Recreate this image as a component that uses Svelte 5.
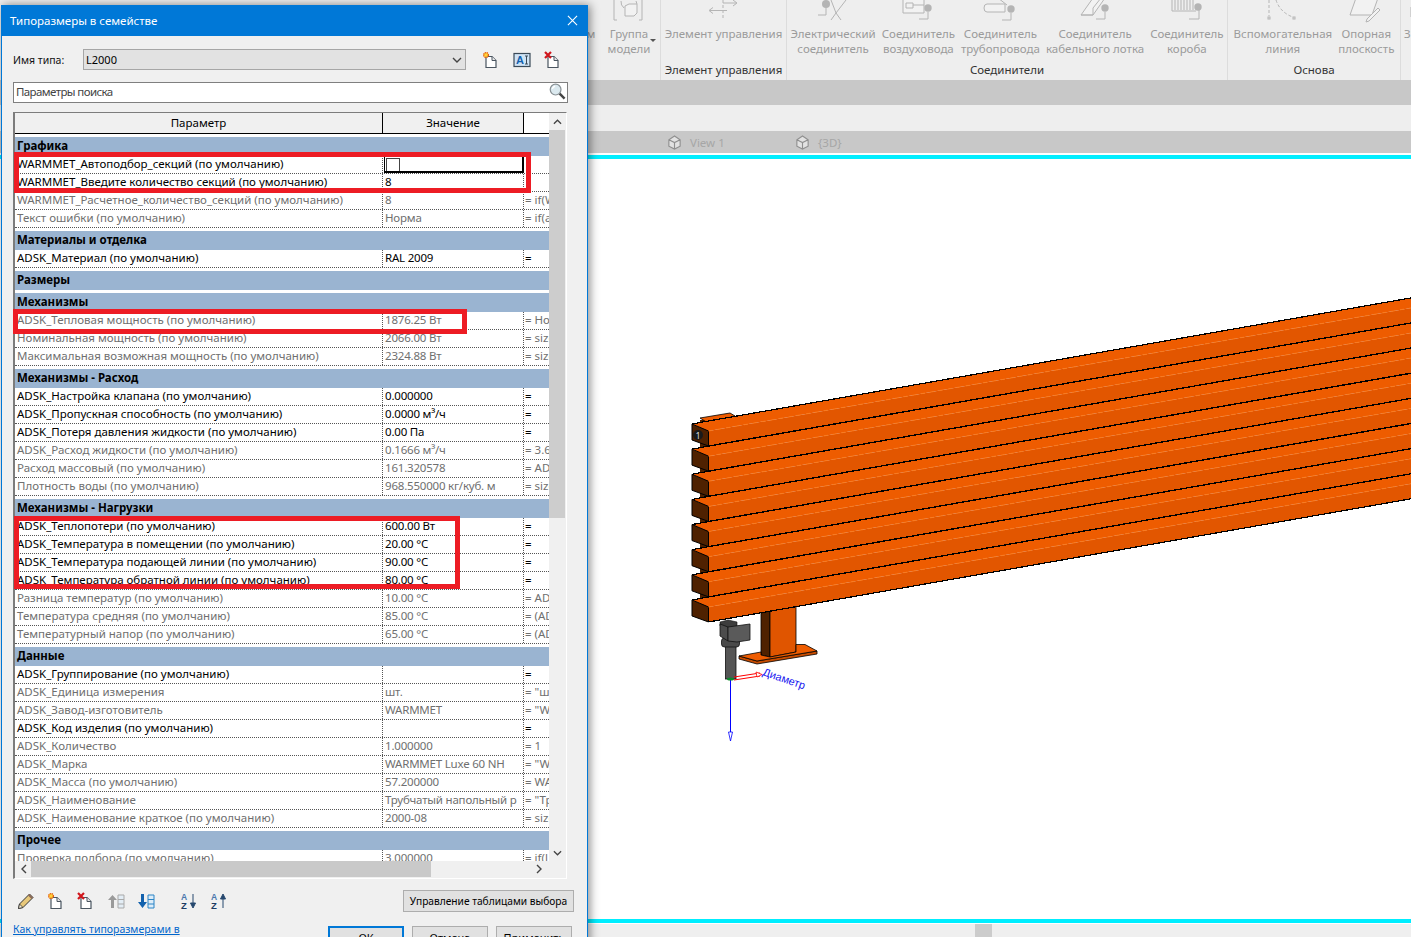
<script>
    const groups = [
        { name: "Графика", rows: [
            { p: "WARMMET_Автоподбор_секций (по умолчанию)", v: "", f: "", check: true },
            { p: "WARMMET_Введите количество секций (по умолчанию)", v: "8", f: "" },
            { p: "WARMMET_Расчетное_количество_секций (по умолчанию)", v: "8", f: "= if(W", off: true },
            { p: "Текст ошибки (по умолчанию)", v: "Норма", f: "= if(a", off: true },
        ]},
        { name: "Материалы и отделка", rows: [
            { p: "ADSK_Материал (по умолчанию)", v: "RAL 2009", f: "=" },
        ]},
        { name: "Размеры", rows: [] },
        { name: "Механизмы", rows: [
            { p: "ADSK_Тепловая мощность (по умолчанию)", v: "1876.25 Вт", f: "= Но", off: true },
            { p: "Номинальная мощность (по умолчанию)", v: "2066.00 Вт", f: "= size", off: true },
            { p: "Максимальная возможная мощность (по умолчанию)", v: "2324.88 Вт", f: "= size", off: true },
        ]},
        { name: "Механизмы - Расход", rows: [
            { p: "ADSK_Настройка клапана (по умолчанию)", v: "0.000000", f: "=" },
            { p: "ADSK_Пропускная способность (по умолчанию)", v: "0.0000 м³/ч", f: "=" },
            { p: "ADSK_Потеря давления жидкости (по умолчанию)", v: "0.00 Па", f: "=" },
            { p: "ADSK_Расход жидкости (по умолчанию)", v: "0.1666 м³/ч", f: "= 3.6", off: true },
            { p: "Расход массовый (по умолчанию)", v: "161.320578", f: "= AD", off: true },
            { p: "Плотность воды (по умолчанию)", v: "968.550000 кг/куб. м", f: "= size", off: true },
        ]},
        { name: "Механизмы - Нагрузки", rows: [
            { p: "ADSK_Теплопотери (по умолчанию)", v: "600.00 Вт", f: "=" },
            { p: "ADSK_Температура в помещении (по умолчанию)", v: "20.00 °C", f: "=" },
            { p: "ADSK_Температура подающей линии (по умолчанию)", v: "90.00 °C", f: "=" },
            { p: "ADSK_Температура обратной линии (по умолчанию)", v: "80.00 °C", f: "=" },
            { p: "Разница температур (по умолчанию)", v: "10.00 °C", f: "= AD", off: true },
            { p: "Температура средняя (по умолчанию)", v: "85.00 °C", f: "= (AD", off: true },
            { p: "Температурный напор (по умолчанию)", v: "65.00 °C", f: "= (AD", off: true },
        ]},
        { name: "Данные", rows: [
            { p: "ADSK_Группирование (по умолчанию)", v: "", f: "=" },
            { p: "ADSK_Единица измерения", v: "шт.", f: "= \"ш", off: true },
            { p: "ADSK_Завод-изготовитель", v: "WARMMET", f: "= \"W", off: true },
            { p: "ADSK_Код изделия (по умолчанию)", v: "", f: "=" },
            { p: "ADSK_Количество", v: "1.000000", f: "= 1", off: true },
            { p: "ADSK_Марка", v: "WARMMET Luxe 60 NH", f: "= \"W", off: true },
            { p: "ADSK_Масса (по умолчанию)", v: "57.200000", f: "= WA", off: true },
            { p: "ADSK_Наименование", v: "Трубчатый напольный р", f: "= \"Тр", off: true },
            { p: "ADSK_Наименование краткое (по умолчанию)", v: "2000-08", f: "= size", off: true },
        ]},
        { name: "Прочее", rows: [
            { p: "Проверка подбора (по умолчанию)", v: "3.000000", f: "= if(l", off: true },
        ]},
    ];

    // радиатор: 8 секций с шагом 25px, все точки в координатах страницы
    const slope = 0.1753;
    const right = 1411;
    const edge = (y, x) => (y - slope * (x - 708.5)).toFixed(1);
    const bars = [0, 1, 2, 3, 4, 5, 6, 7].map((k) => {
        const d = 25.14 * k;
        return {
            top: `692,${424 + d} 701,${edge(421 + d, 701)} ${right},${edge(421 + d, right)} ${right},${edge(431 + d, right)} 708.5,${431 + d}`,
            front: `708.5,${431 + d} ${right},${edge(431 + d, right)} ${right},${edge(446 + d, right)} 708.5,${446 + d}`,
            end: `692,${424 + d} 708.5,${431 + d} 708.5,${446 + d} 692,${440 + d}`,
            topLine: `701,${edge(421 + d, 701)} ${right},${edge(421 + d, right)}`,
            botLine: `708.5,${446 + d} ${right},${edge(446 + d, right)}`,
            dash: `708.5,${431 + d} ${right},${edge(431 + d, right)}`,
        };
    });
</script>

{#snippet docPage()}
    <path d="M4 5.5h6l4 4v7H4z" fill="#fff" stroke="#4a5560" stroke-width="1.2" />
    <path d="M10 5.5v4h4" fill="#e8e8e8" stroke="#4a5560" stroke-width="1" />
{/snippet}

{#snippet newDoc()}
    <svg class="ico" viewBox="0 0 18 18">
        {@render docPage()}
        <circle cx="4" cy="4" r="2.4" fill="#ffd23a" stroke="#e2560c" stroke-width="1.3" stroke-dasharray="1.2 0.6" />
    </svg>
{/snippet}

{#snippet delDoc()}
    <svg class="ico" viewBox="0 0 18 18">
        {@render docPage()}
        <path d="M1 1l6 6M7 1L1 7" stroke="#d0161c" stroke-width="2.2" />
    </svg>
{/snippet}

<div class="app">
    <div class="ribbon">
        <div class="panel p-model">
            <div class="tools">
                <div class="tool narrow"><div class="iconbox"></div><span>м</span></div>
                <div class="tool model">
                    <svg class="ri" viewBox="-20 0 40 26">
                        <path d="M-12 -2h-3v22h3M10 -2h3v22h-3" />
                        <path d="M-4 6l4-2h8v9l-3 3h-9z" fill="#f4f4f4" />
                        <path d="M-8 1a8 8 0 0 0 3 7M7 1l1 3" />
                    </svg>
                    <span>Группа<br />модели</span>
                    <i class="caret"></i>
                </div>
            </div>
            <div class="plabel"></div>
        </div>
        <div class="panel p-control">
            <div class="tools">
                <div class="tool">
                    <svg class="ri" viewBox="-20 0 40 26">
                        <path d="M0 0v20" stroke-dasharray="3 2" />
                        <path d="M0 3h13M10 0l4 3-4 3" />
                        <path d="M4 10.500h-17M-10 7.500l-4 3 4 3" />
                    </svg>
                    <span>Элемент управления<br />&nbsp;</span>
                </div>
            </div>
            <div class="plabel">Элемент управления</div>
        </div>
        <div class="panel p-conn">
            <div class="tools">
                <div class="tool">
                    <svg class="ri" viewBox="-20 0 40 26">
                        <circle cx="-7" cy="4" r="4" fill="#b4b4b4" />
                        <path d="M-15 15h8v-7" />
                        <path d="M3 13L13 0M3 13l5 7M3 13l-5 7M3 13L-2 0" />
                    </svg>
                    <span>Электрический<br />соединитель</span>
                </div>
                <div class="tool">
                    <svg class="ri" viewBox="-20 0 40 26">
                        <path d="M-15 -2h21v15h-21z" fill="#f2f2f2" />
                        <path d="M-12 3h7v5h-7zM-5 5h11" />
                        <circle cx="10" cy="8" r="3.700" fill="#b4b4b4" />
                        <path d="M1 19h9v-7" />
                    </svg>
                    <span>Соединитель<br />воздуховода</span>
                </div>
                <div class="tool">
                    <svg class="ri" viewBox="-20 0 40 26">
                        <path d="M-13 4h18v8h-18a3 4 0 0 1 0-8z" fill="#f2f2f2" />
                        <path d="M-2 -2l9 7" />
                        <circle cx="11" cy="9" r="3.700" fill="#b4b4b4" />
                        <path d="M2 20h9v-7" />
                    </svg>
                    <span>Соединитель<br />трубопровода</span>
                </div>
                <div class="tool">
                    <svg class="ri" viewBox="-20 0 40 26">
                        <path d="M-14 15l12-17h12l-12 17z" fill="#f2f2f2" />
                        <path d="M-2 15v-7l8-10M-14 15h12" />
                        <circle cx="10" cy="8" r="3.700" fill="#b4b4b4" />
                        <path d="M1 19h9v-7" />
                    </svg>
                    <span>Соединитель<br />кабельного лотка</span>
                </div>
                <div class="tool">
                    <svg class="ri" viewBox="-20 0 40 26">
                        <path d="M-15 -2v13h24" />
                        <path d="M-12 -2v12M-9 -2v12M-6 -2v12M-3 -2v12M0 -2v12M3 -2v12M6 -2v12" />
                        <circle cx="11" cy="7" r="3.700" fill="#b4b4b4" />
                        <path d="M2 19h10v-9" />
                    </svg>
                    <span>Соединитель<br />короба</span>
                </div>
            </div>
            <div class="plabel">Соединители</div>
        </div>
        <div class="panel p-base">
            <div class="tools">
                <div class="tool">
                    <svg class="ri" viewBox="-20 0 40 26">
                        <path d="M-14 0v16" stroke-dasharray="3 2" />
                        <path d="M-7 0a26 26 0 0 0 17 17" stroke-dasharray="3 2" />
                        <rect x="-15" y="17" width="2" height="2" />
                        <rect x="10" y="17" width="2" height="2" />
                    </svg>
                    <span>Вспомогательная<br />линия</span>
                </div>
                <div class="tool">
                    <svg class="ri" viewBox="-20 0 40 26">
                        <path d="M-10 -2h22l-6 17h-22z" fill="#e4e4e4" />
                        <path d="M1 19l11-11 2 2-11 11-3 1z" fill="#f2f2f2" />
                    </svg>
                    <span>Опорная<br />плоскость</span>
                </div>
            </div>
            <div class="plabel">Основа</div>
        </div>
        <div class="panel p-rest">
            <div class="tools">
                <div class="tool">
                    <svg class="ri" viewBox="-20 0 40 26"><path d="M-13 7v10" /></svg>
                    <span>З</span>
                </div>
            </div>
        </div>
    </div>
    <div class="band"></div>
    <div class="strip"></div>
    <div class="tabs">
        <div class="tab">
            <svg class="tabico" viewBox="0 0 16 16"><path d="M8 1L2 5v7l6 3 6-3V5zM2 5l6 3 6-3M8 8v7" /></svg>
            <span>View 1</span>
        </div>
        <div class="tab">
            <svg class="tabico" viewBox="0 0 16 16"><path d="M8 1L2 5v7l6 3 6-3V5zM2 5l6 3 6-3M8 8v7" /></svg>
            <span>{"{3D}"}</span>
        </div>
    </div>
    <div class="cyan first"></div>
    <svg class="canvas" viewBox="0 159 1411 760">
        <!-- задняя стойка -->
        <rect x="700" y="420" width="9" height="190" fill="#4f2100" />
        <polygon points="700,418 730,413 735,416 708,423" fill="#ee5c00" stroke="#000" stroke-width="0.8" />

        <!-- опора -->
        <polygon points="761,613 770,611 770,657 761,655" fill="#4f2100" stroke="#000" stroke-width="0.8" />
        <polygon points="770,611 796,606 796,652 770,657" fill="#e05500" stroke="#000" stroke-width="0.8" />
        <polygon points="739,656 739,659 757,664 817,654 817,651 757,661" fill="#c84c00" stroke="#000" stroke-width="0.8" />
        <polygon points="739,656 761,652 761,655 770,657 796,652 796,644.500 805,644.500 817,651 757,661" fill="#ee5c00" stroke="#000" stroke-width="0.8" />

        <!-- клапан -->
        <rect x="725.500" y="646" width="10.500" height="33" fill="#555" stroke="#111" stroke-width="0.8" />
        <rect x="721.500" y="638" width="18" height="9" rx="3" fill="#4a4a4a" stroke="#111" stroke-width="0.8" />
        <polygon points="720,622 728,620 737,622 737,626 728,628 720,626" fill="#3d3d3d" stroke="#111" stroke-width="0.6" />
        <polygon points="720,624 728,627 728,641 720,636" fill="#4c4c4c" stroke="#111" stroke-width="0.8" />
        <polygon points="728,627 750,624 750,640 737,642 728,641" fill="#5a5a5a" stroke="#111" stroke-width="0.8" />

        {#each bars as bar}
            <polygon points={bar.top} fill="#ee5c00" />
            <polygon points={bar.front} fill="#e25600" />
            <polygon points={bar.end} fill="#4f2100" stroke="#000" stroke-width="1" />
            <polyline points={bar.dash} class="dash" />
            <polyline points={bar.topLine} class="edge" />
            <polyline points={bar.botLine} class="edge" />
            <polyline points={bar.top.split(" ").slice(0, 2).join(" ")} class="edge" />
        {/each}

        <circle cx="698" cy="435" r="5" fill="#1a1a1a" />
        <text x="698" y="439" class="marker">1</text>

        <!-- ручки размера -->
        <path d="M730.500 680V733" stroke="#0000ff" fill="none" />
        <polygon points="728.500,732 732.500,732 730.500,741" fill="#fff" stroke="#0000ff" stroke-width="0.8" />
        <path d="M734 677L760 673M734 680L760 676" stroke="#ff0000" fill="none" />
        <polygon points="756,672 762,674.500 757,677" fill="#fff" stroke="#ff0000" stroke-width="0.8" />
        <ellipse cx="730.500" cy="679" rx="3.500" ry="1.500" fill="#0a8a2a" />
        <text x="762" y="675" class="dim" transform="rotate(19 762 675)">Диаметр</text>
    </svg>
    <div class="cyan"></div>
    <div class="status"><div class="statusblock"></div></div>

    <div class="dialog">
        <div class="titlebar">
            <span>Типоразмеры в семействе</span>
            <svg class="close" viewBox="0 0 12 12"><path d="M1 1l10 10M11 1L1 11" /></svg>
        </div>
        <div class="body">
            <div class="typerow">
                <label for="typesel">Имя типа:</label>
                <div class="select" id="typesel">
                    <span>L2000</span>
                    <svg viewBox="0 0 10 6"><path d="M1 1l4 4 4-4" /></svg>
                </div>
                <div class="typeicons">
                    {@render newDoc()}
                    <svg class="ico" viewBox="0 0 18 18">
                        <rect x="1" y="2.500" width="16" height="13" fill="#cfe3f5" stroke="#3a4a58" stroke-width="1.200" />
                        <text x="7" y="13" class="aicon">A</text>
                        <path d="M12 5h3M12 13h3M13.500 5v8" stroke="#3a4a58" fill="none" />
                    </svg>
                    {@render delDoc()}
                </div>
            </div>

            <div class="search">
                <span>Параметры поиска</span>
                <svg viewBox="0 0 18 18">
                    <path d="M11 11l5.500 5.500" stroke="#444" stroke-width="2.600" />
                    <circle cx="7" cy="7" r="5.700" fill="#dbe9ef" stroke="#8a9296" stroke-width="1.300" />
                    <path d="M3.500 6a4 4 0 0 1 3-2.500" stroke="#fff" stroke-width="1.500" fill="none" />
                </svg>
            </div>

            <div class="table">
                <div class="grid">
                    <div class="head">
                        <div>Параметр</div>
                        <div>Значение</div>
                        <div></div>
                    </div>
                    {#each groups as group}
                        <div class="group">{group.name}</div>
                        {#each group.rows as row}
                            <div class="row" class:off={row.off}>
                                <div class="c">{row.p}</div>
                                <div class="c val" class:sel={row.check}>
                                    {#if row.check}<i class="check"></i>{/if}{row.v}
                                </div>
                                <div class="c">{row.f}</div>
                            </div>
                        {/each}
                    {/each}
                </div>
                <div class="vbar">
                    <svg viewBox="0 0 10 6"><path d="M1 5l4-4 4 4" /></svg>
                    <div class="vthumb"></div>
                    <svg class="down" viewBox="0 0 10 6"><path d="M1 1l4 4 4-4" /></svg>
                </div>
                <div class="hbar">
                    <svg viewBox="0 0 6 10"><path d="M5 1L1 5l4 4" /></svg>
                    <div class="hthumb"></div>
                    <svg class="next" viewBox="0 0 6 10"><path d="M1 1l4 4-4 4" /></svg>
                </div>
            </div>

            <div class="toolbar">
                <div class="toolicons">
                    <svg class="ico" viewBox="0 0 18 18">
                        <path d="M1.500 16.500l1-4.500L12.500 2l3.500 3.500-10 10z" fill="#e8c87a" stroke="#333" stroke-width="1" />
                        <path d="M12.500 2l3.500 3.500-1.500 1.500L11 3.500z" fill="#8a6a5a" />
                        <path d="M1.500 16.500l1-4.500 3.500 3.500z" fill="#f3ead2" stroke="#333" stroke-width="0.800" />
                    </svg>
                    {@render newDoc()}
                    {@render delDoc()}
                    <svg class="ico" viewBox="0 0 18 18">
                        <path d="M4 16V8H1l4.500-5L10 8H7v8z" fill="#9a9a9a" />
                        <path d="M11 3h6v13h-6z" fill="#e3edf5" stroke="#a9a9a9" />
                        <path d="M11 7.500h6M11 12h6" stroke="#a9a9a9" />
                    </svg>
                    <svg class="ico" viewBox="0 0 18 18">
                        <path d="M4 2v8H1l4.500 6L10 10H7V2z" fill="#1261ad" />
                        <path d="M11 3h6v13h-6z" fill="#dcecf8" stroke="#2b84c6" />
                        <path d="M11 7.500h6M11 12h6" stroke="#2b84c6" />
                    </svg>
                    <svg class="ico gapped" viewBox="0 0 18 18">
                        <text x="1" y="8" class="sortl">A</text>
                        <text x="1" y="17" class="sortl dark">Z</text>
                        <path d="M13 2v12M10.500 11l2.500 5 2.500-5z" stroke="#26486e" fill="#26486e" />
                    </svg>
                    <svg class="ico" viewBox="0 0 18 18">
                        <text x="1" y="8" class="sortl">A</text>
                        <text x="1" y="17" class="sortl dark">Z</text>
                        <path d="M13 16V5M10.500 7l2.500-5 2.500 5z" stroke="#26486e" fill="#26486e" />
                    </svg>
                </div>
                <button class="btn lookup">Управление таблицами выбора</button>
            </div>

            <div class="footer">
                <span class="link">Как управлять типоразмерами в</span>
                <div class="actions">
                    <button class="btn act primary">ОК</button>
                    <button class="btn act">Отмена</button>
                    <button class="btn act">Применить</button>
                </div>
            </div>
        </div>

        <div class="mark m1"></div>
        <div class="mark m2"></div>
        <div class="mark m3"></div>
    </div>
</div>

<style>
    :global(body) {
        margin: 0;
        overflow: hidden;
        font-family: "Noto Sans", "Open Sans", sans-serif;
        font-size: 11.5px;
    }

    .app {
        position: relative;
        width: 1411px;
        height: 937px;
        overflow: hidden;
        display: flex;
        flex-direction: column;
        background: #fff;
    }

    .ribbon {
        height: 80px;
        flex: none;
        display: flex;
        padding-left: 578px;
        background: #eeeeee;
        box-sizing: border-box;
        color: #9b9b9b;
        overflow: hidden;
    }

    .panel {
        display: flex;
        flex: none;
        flex-direction: column;
        border-right: 1px solid #dcdcdc;
        box-sizing: border-box;
    }

    .p-model { width: 83px; }
    .p-control { width: 126px; }
    .p-conn { width: 441px; }
    .p-base { width: 173px; }
    .p-rest { border: 0; width: 20px; }

    .tools {
        display: flex;
        justify-content: center;
        height: 63px;
    }

    .p-model .tools { justify-content: flex-start; }
    .p-rest .tools { justify-content: flex-start; }
    .p-rest .tool { align-items: flex-start; }

    .tool {
        position: relative;
        display: flex;
        flex-direction: column;
        align-items: center;
        padding: 0 3px;
        text-align: center;
        line-height: 15px;
        white-space: nowrap;
    }

    .tool.narrow { width: 26px; padding: 0; }
    .tool.model { width: 44px; }
    .iconbox { height: 26px; }

    .ri {
        width: 40px;
        height: 26px;
        flex: none;
        overflow: hidden;
    }

    .ri path, .ri rect {
        fill: none;
        stroke: #b4b4b4;
        stroke-width: 1;
    }

    .ri path[fill] { fill: #f2f2f2; }

    .caret {
        position: absolute;
        right: -2px;
        top: 39px;
        border: 3px solid transparent;
        border-top: 3px solid #555;
    }

    .plabel {
        height: 17px;
        line-height: 14px;
        text-align: center;
        color: #333;
    }

    .band {
        height: 25px;
        flex: none;
        background: #c8c8c8;
    }

    .strip {
        height: 26px;
        flex: none;
        background: #eeeeee;
    }

    .tabs {
        height: 22px;
        flex: none;
        display: flex;
        padding-left: 667px;
        background: #c8c8c8;
        color: #a6a6a6;
        border-bottom: 2px solid #fff;
    }

    .tab {
        width: 128px;
        display: flex;
        align-items: center;
        gap: 8px;
    }

    .tabico {
        width: 15px;
        height: 15px;
    }

    .tabico path {
        fill: #e2e2e2;
        stroke: #8f8f8f;
        stroke-width: 1.2;
    }

    .cyan {
        height: 4px;
        flex: none;
        background: #00eeff;
    }

    .canvas {
        display: block;
        width: 1411px;
        height: 760px;
        flex: none;
    }

    .edge {
        fill: none;
        stroke: #000;
        stroke-width: 1.2;
        shape-rendering: crispEdges;
    }

    .dash {
        fill: none;
        stroke: #fb7a1c;
        stroke-width: 0.9;
        stroke-dasharray: 4 5;
    }

    .marker {
        font-size: 9px;
        fill: #ddd;
        text-anchor: middle;
    }

    .dim {
        font-size: 11px;
        fill: #1414f0;
        font-family: "Liberation Sans", sans-serif;
    }

    .status {
        flex: 1;
        margin-top: 1px;
        background: #efefef;
        padding-left: 975px;
    }

    .statusblock {
        width: 17px;
        height: 100%;
        background: #cccccc;
    }

    /* окно поверх ревита */
    .dialog {
        position: absolute;
        left: 1px;
        top: 5px;
        width: 587px;
        height: 945px;
        box-sizing: border-box;
        border: 1px solid #0078d7;
        background: #f0f0f0;
        box-shadow: 2px 0 9px rgba(0, 0, 0, 0.45);
        color: #000;
    }

    .titlebar {
        height: 30px;
        display: flex;
        align-items: center;
        justify-content: space-between;
        padding: 0 9px 2px 8px;
        box-sizing: border-box;
        background: #0078d7;
        color: #fff;
        font-size: 11.5px;
    }

    .close {
        width: 11px;
        height: 11px;
    }

    .close path {
        stroke: #fff;
        stroke-width: 1.2;
        fill: none;
    }

    .body {
        padding: 13px 19px 0 11px;
    }

    .typerow {
        display: flex;
        align-items: center;
        height: 21px;
    }

    .typerow label {
        width: 70px;
        flex: none;
        color: #111;
        font-size: 10.5px;
    }

    .select {
        width: 383px;
        height: 21px;
        box-sizing: border-box;
        display: flex;
        align-items: center;
        justify-content: space-between;
        padding: 0 3px 0 2px;
        background: #e2e2e2;
        border: 1px solid #a6a6a6;
        font-size: 11px;
    }

    .select svg {
        width: 10px;
        height: 6px;
    }

    .select path, .vbar path, .hbar path {
        fill: none;
        stroke: #444;
        stroke-width: 1.4;
    }

    .typeicons {
        display: flex;
        gap: 13px;
        margin-left: 16px;
    }

    .ico {
        width: 18px;
        height: 18px;
        flex: none;
    }

    .aicon {
        font: bold 11px "Liberation Sans", sans-serif;
        fill: #1261ad;
        text-anchor: middle;
    }

    .search {
        height: 21px;
        margin-top: 12px;
        width: 555px;
        box-sizing: border-box;
        display: flex;
        align-items: center;
        justify-content: space-between;
        padding: 0 1px 2px 2px;
        background: #fff;
        border: 1px solid #7f7f7f;
        color: #444;
        letter-spacing: -0.600px;
    }

    .search svg {
        width: 17px;
        height: 17px;
    }

    .table {
        margin-top: 9px;
        width: 554px;
        height: 767px;
        box-sizing: border-box;
        display: grid;
        grid-template-columns: 534px 16px;
        grid-template-rows: 748px 16px;
        border-left: 2px solid #7c7c7c;
        border-top: 1px solid #7c7c7c;
        background: #f0f0f0;
        border-right: 1px solid #fff;
        border-bottom: 1px solid #fff;
    }

    .grid {
        background: #fff;
        overflow: hidden;
        color: #000;
    }

    .head {
        display: grid;
        grid-template-columns: 368px 141px 25px;
        height: 20px;
        background: #f0f0f0;
        border-bottom: 1px solid #000;
        box-sizing: content-box;
    }

    .head > div {
        text-align: center;
        line-height: 20px;
        border-right: 1px solid #000;
        box-sizing: border-box;
    }

    .head > div:last-child {
        border: 0;
        background: #fff;
    }

    .group {
        height: 19px;
        margin-top: 3px;
        padding-left: 2px;
        line-height: 18px;
        font-weight: 700;
        background: #9ab4d1;
    }

    .row {
        display: grid;
        grid-template-columns: 368px 141px 25px;
        height: 18px;
        box-sizing: border-box;
        border-bottom: 1px dotted #555;
    }

    .row.off {
        color: #6f6f6f;
    }

    .c {
        padding-left: 2px;
        line-height: 16px;
        white-space: nowrap;
        overflow: hidden;
        border-right: 1px dotted #555;
        box-sizing: border-box;
    }

    .c:last-child {
        border-right: 0;
        padding-left: 1px;
    }

    .val {
        padding-left: 2px;
        letter-spacing: -0.2px;
    }

    .val.sel {
        margin-left: 1px;
        border: 1px solid #000;
        border-width: 1px 2px 2px 1px;
        padding-left: 1px;
    }

    .check {
        display: block;
        width: 12px;
        height: 12px;
        margin-top: 1px;
        border: 1px solid #444;
        background: #fff;
    }

    .vbar {
        position: relative;
        background: #f0f0f0;
        display: flex;
        flex-direction: column;
        align-items: center;
    }

    .vbar svg {
        flex: none;
        width: 9px;
        height: 6px;
        margin: 6px 0 5px;
    }

    .vbar .down {
        position: absolute;
        bottom: 5px;
        margin: 0;
    }

    .vthumb {
        width: 100%;
        height: 388px;
        background: #cdcdcd;
    }

    .hbar {
        grid-column: 1 / 3;
        display: flex;
        align-items: center;
        background: #f0f0f0;
        padding: 0 4px 0 6px;
    }

    .hbar svg {
        width: 6px;
        height: 10px;
        flex: none;
    }

    .hbar .next {
        margin-left: 105px;
    }

    .hthumb {
        width: 400px;
        height: 16px;
        margin-left: 4px;
        background: #c9c9c9;
    }

    .toolbar {
        margin-top: 11px;
        margin-right: -6px;
        display: flex;
        align-items: center;
        justify-content: space-between;
        height: 22px;
    }

    .toolicons {
        display: flex;
        gap: 12px;
        padding-left: 4px;
    }

    .gapped {
        margin-left: 13px;
    }

    .sortl {
        font: bold 8.500px "Liberation Sans", sans-serif;
        fill: #4a78ad;
    }

    .sortl.dark {
        fill: #1d3c63;
        font-size: 9.500px;
    }

    .btn {
        box-sizing: border-box;
        height: 22px;
        padding: 0;
        background: #e1e1e1;
        border: 1px solid #adadad;
        font-family: inherit;
        font-size: 11px;
        color: #000;
        white-space: nowrap;
    }

    .lookup {
        width: 171px;
        font-size: 10.2px;
    }

    .footer {
        margin-top: 10px;
        margin-right: -4px;
        display: flex;
        justify-content: space-between;
    }

    .link {
        color: #0066cc;
        text-decoration: underline;
        line-height: 15px;
        font-size: 10.5px;
    }

    .actions {
        display: flex;
        gap: 8px;
        margin-top: 4px;
    }

    .act {
        width: 76px;
    }

    .primary {
        border: 2px solid #0078d7;
    }

    /* красные рамки */
    .mark {
        position: absolute;
        box-sizing: border-box;
        border: 5px solid #ed1c24;
    }

    .m1 { left: 12px; top: 146px; width: 517px; height: 41px; }
    .m2 { left: 11px; top: 303px; width: 454px; height: 25px; }
    .m3 { left: 12px; top: 510px; width: 446px; height: 73px; }
</style>
